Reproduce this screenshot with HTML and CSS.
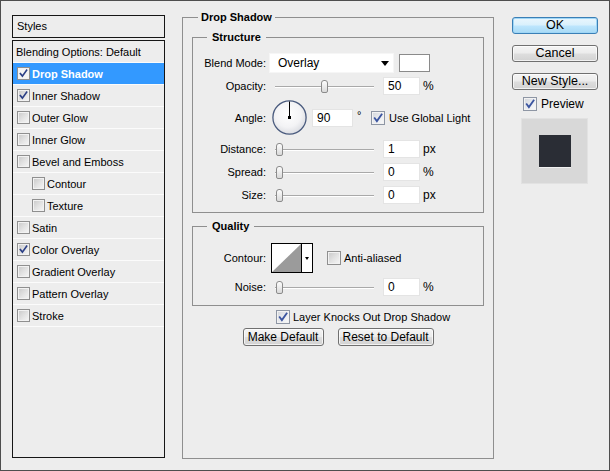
FILE: index.html
```html
<!DOCTYPE html>
<html>
<head>
<meta charset="utf-8">
<link rel="stylesheet" href="styles.css">
</head>
<body>
<div class="window">
  <aside class="styles-panel">
    <div class="styles-head">Styles</div>
    <ul class="styles-list">
      <li class="style-row plain">Blending Options: Default</li>
      <li class="style-row selected"><span class="cb sm on"><svg viewBox="0 0 13 13"><path d="M2.8 6.6 L5.2 9.6 L10.2 2.6" /></svg></span>Drop Shadow</li>
      <li class="style-row"><span class="cb sm on"><svg viewBox="0 0 13 13"><path d="M2.8 6.6 L5.2 9.6 L10.2 2.6" /></svg></span>Inner Shadow</li>
      <li class="style-row"><span class="cb sm"></span>Outer Glow</li>
      <li class="style-row"><span class="cb sm"></span>Inner Glow</li>
      <li class="style-row"><span class="cb sm"></span>Bevel and Emboss</li>
      <li class="style-row sub"><span class="cb sm"></span>Contour</li>
      <li class="style-row sub"><span class="cb sm"></span>Texture</li>
      <li class="style-row"><span class="cb sm"></span>Satin</li>
      <li class="style-row"><span class="cb sm on"><svg viewBox="0 0 13 13"><path d="M2.8 6.6 L5.2 9.6 L10.2 2.6" /></svg></span>Color Overlay</li>
      <li class="style-row"><span class="cb sm"></span>Gradient Overlay</li>
      <li class="style-row"><span class="cb sm"></span>Pattern Overlay</li>
      <li class="style-row"><span class="cb sm"></span>Stroke</li>
    </ul>
  </aside>

  <main class="panel">
    <fieldset class="group outer">
      <legend class="legend-outer">Drop Shadow</legend>

      <fieldset class="group inner structure">
        <legend class="legend-inner">Structure</legend>

        <div class="row row-blend">
          <span class="lbl">Blend Mode:</span>
          <div class="select"><span class="select-text">Overlay</span><span class="select-arrow"></span></div>
          <span class="swatch"></span>
        </div>

        <div class="row row-num gap4">
          <span class="lbl">Opacity:</span>
          <div class="slider"><span class="thumb" style="left:46px"></span></div>
          <span class="num">50</span>
          <span class="unit">%</span>
        </div>

        <div class="row row-angle">
          <span class="lbl">Angle:</span>
          <svg class="dial" viewBox="0 0 35 35" width="35" height="35">
            <defs>
              <radialGradient id="dialFill" cx="45%" cy="40%" r="65%">
                <stop offset="0" stop-color="#ffffff"/>
                <stop offset="0.6" stop-color="#f3f3f5"/>
                <stop offset="1" stop-color="#d6d8de"/>
              </radialGradient>
            </defs>
            <circle cx="17.5" cy="17.5" r="16.6" fill="url(#dialFill)" stroke="#4a5b7e" stroke-width="1.3"/>
            <line x1="17.5" y1="17.5" x2="17.5" y2="1.5" stroke="#000" stroke-width="1"/>
            <rect x="16" y="16" width="3" height="3" fill="#000"/>
          </svg>
          <span class="num num-angle">90</span>
          <span class="deg">°</span>
          <span class="cb md on gl"><svg viewBox="0 0 14 14"><path d="M3.2 7.2 L5.7 10.6 L11.2 2.8" /></svg></span>
          <span class="cb-label">Use Global Light</span>
        </div>

        <div class="row row-num">
          <span class="lbl">Distance:</span>
          <div class="slider"><span class="thumb" style="left:1px"></span></div>
          <span class="num">1</span>
          <span class="unit">px</span>
        </div>

        <div class="row row-num">
          <span class="lbl">Spread:</span>
          <div class="slider"><span class="thumb" style="left:1px"></span></div>
          <span class="num">0</span>
          <span class="unit">%</span>
        </div>

        <div class="row row-num">
          <span class="lbl">Size:</span>
          <div class="slider"><span class="thumb" style="left:1px"></span></div>
          <span class="num">0</span>
          <span class="unit">px</span>
        </div>
      </fieldset>

      <fieldset class="group inner quality">
        <legend class="legend-inner">Quality</legend>

        <div class="row row-contour">
          <span class="lbl">Contour:</span>
          <div class="contour">
            <svg class="contour-curve" viewBox="0 0 30 28" width="30" height="28" preserveAspectRatio="none">
              <polygon points="0,28 30,0 30,28" fill="#9b9b9b"/>
            </svg>
            <span class="contour-btn"><span class="mini-arrow"></span></span>
          </div>
          <span class="cb md aa"></span>
          <span class="cb-label">Anti-aliased</span>
        </div>

        <div class="row row-num">
          <span class="lbl">Noise:</span>
          <div class="slider"><span class="thumb" style="left:1px"></span></div>
          <span class="num">0</span>
          <span class="unit">%</span>
        </div>
      </fieldset>

      <div class="knock">
        <span class="cb md on gl"><svg viewBox="0 0 14 14"><path d="M3.2 7.2 L5.7 10.6 L11.2 2.8" /></svg></span>
        <span class="knock-label">Layer Knocks Out Drop Shadow</span>
      </div>

      <div class="defaults">
        <button class="btn btn-make">Make Default</button>
        <button class="btn btn-reset">Reset to Default</button>
      </div>
    </fieldset>
  </main>

  <div class="actions">
    <button class="btn btn-side btn-ok">OK</button>
    <button class="btn btn-side">Cancel</button>
    <button class="btn btn-side">New Style...</button>
    <div class="preview-row">
      <span class="cb md on gl"><svg viewBox="0 0 14 14"><path d="M3.2 7.2 L5.7 10.6 L11.2 2.8" /></svg></span>
      <span class="preview-label">Preview</span>
    </div>
    <div class="preview-box"><span class="preview-square"></span></div>
  </div>
</div>
</body>
</html>
```

FILE: styles.css
```css
* { box-sizing: border-box; }

body {
  margin: 0;
  background: #ededed;
}

.window {
  width: 610px;
  height: 471px;
  border: 1px solid #4e4e4e;
  background: #ededed;
  display: flex;
  align-items: flex-start;
  padding: 9px 0 0 11px;
  font-family: "Liberation Sans", Arial, sans-serif;
  font-size: 11px;
  color: #000;
}

/* ---------- left styles list ---------- */
.styles-panel {
  width: 153px;
  margin-top: 5px;
  display: flex;
  flex-direction: column;
}

.styles-head {
  height: 23px;
  border: 1px solid #161616;
  padding-left: 4px;
  line-height: 21px;
  margin-bottom: 2px;
}

.styles-list {
  list-style: none;
  margin: 0;
  padding: 0;
  height: 418px;
  border: 1px solid #161616;
}

.style-row {
  height: 22px;
  border-bottom: 1px solid #fbfbfb;
  display: flex;
  align-items: center;
  padding-left: 4px;
  white-space: nowrap;
}

.style-row.plain { padding-left: 3px; }
.style-row.sub { padding-left: 19px; }

.style-row.selected {
  background: #3399ff;
  color: #fff;
  font-weight: bold;
}

/* ---------- checkboxes ---------- */
.cb {
  display: inline-flex;
  flex-shrink: 0;
  border: 1px solid #8f8f8f;
  background: linear-gradient(135deg, #c8c8c8 0%, #e4e4e4 55%, #f7f7f7 100%);
  box-shadow: inset 0 0 0 1px #f2f2f2;
}

.cb svg { width: 100%; height: 100%; display: block; }
.cb path { fill: none; stroke: #2b3f86; stroke-width: 1.9; stroke-linecap: square; }

.cb.sm { width: 13px; height: 13px; margin-right: 2px; }
.cb.md { width: 14px; height: 14px; }

.selected .cb { background: #f4f4f4; }
.cb.gl { background: linear-gradient(135deg, #d3d6dc 0%, #eceef1 60%, #fafafa 100%); border-color: #8e96a4; }
.cb.gl path { stroke: #3b55a0; stroke-width: 2.1; }

.cb-label { margin-left: 4px; white-space: nowrap; }

/* ---------- middle panel ---------- */
.panel {
  margin-left: 17px;
}

.group {
  margin: 0;
  border: 1px solid #8f8f8f;
  min-width: 0;
}

.outer {
  width: 312px;
  height: 449px;
  padding: 6px 9px 0;
}

.legend-outer,
.legend-inner {
  font-weight: bold;
  line-height: 14px;
}

.legend-outer { padding: 0 3px; margin-left: 6px; }
.legend-inner { padding: 0 5px; margin-left: 14px; }

.inner { width: 292px; }
.structure { padding: 9px 0 8px; }
.quality { padding: 10px 0 9px; margin-top: 6px; }

.row {
  display: flex;
  align-items: center;
  white-space: nowrap;
}

.lbl {
  width: 73px;
  flex-shrink: 0;
  text-align: right;
}

.row-blend { height: 20px; }
.row-num { height: 18px; margin-top: 5px; }
.row-num.gap4 { margin-top: 4px; }
.row-angle { height: 35px; margin-top: 5px; }
.row-contour { height: 30px; }
.quality .row-num { margin-top: 5px; }

.select {
  width: 125px;
  height: 20px;
  margin-left: 3px;
  background: #fff;
  border: 1px solid #f6f6f6;
  display: flex;
  align-items: center;
  padding-left: 8px;
  font-size: 12px;
}

.select-arrow {
  margin-left: auto;
  margin-right: 4px;
  width: 0;
  height: 0;
  border-left: 4.5px solid transparent;
  border-right: 4.5px solid transparent;
  border-top: 5px solid #000;
}

.swatch {
  width: 31px;
  height: 18px;
  margin-left: 5px;
  border: 1px solid #8a8a8a;
  background: #fff;
}

.slider {
  position: relative;
  width: 99px;
  height: 13px;
  margin-left: 9px;
  background:
    linear-gradient(#a9a9a9, #a9a9a9) 0 6px / 100% 1px no-repeat,
    linear-gradient(#ffffff, #ffffff) 0 7px / 100% 1px no-repeat;
}

.thumb {
  position: absolute;
  top: 0;
  width: 7px;
  height: 13px;
  border: 1px solid #8b8b8b;
  border-radius: 3px 3px 2px 2px;
  background: linear-gradient(#fdfdfd, #d9d9d9);
}

.num {
  width: 37px;
  height: 18px;
  margin-left: 9px;
  background: #fff;
  border: 1px solid #e4e4e4;
  padding-left: 4px;
  line-height: 16px;
  font-size: 12px;
}

.unit { margin-left: 3px; font-size: 12px; }

.dial { margin-left: 6px; flex-shrink: 0; }

.num-angle { width: 41px; margin-left: 5px; }

.deg { margin-left: 4px; width: 5px; margin-top: -6px; }

.row-angle .cb { margin-left: 9px; }

.contour {
  width: 42px;
  height: 30px;
  margin-left: 5px;
  border: 1px solid #000;
  background: #fff;
  display: flex;
}

.contour-curve {
  width: 30px;
  height: 28px;
  border-right: 1px solid #000;
  display: block;
}

.contour-btn {
  flex: 1;
  display: flex;
  align-items: center;
  justify-content: center;
}

.mini-arrow {
  width: 0;
  height: 0;
  border-left: 2.5px solid transparent;
  border-right: 2.5px solid transparent;
  border-top: 3px solid #000;
}

.cb.aa { margin-left: 14px; }
.row-contour .cb-label { margin-left: 3px; }

.knock {
  display: flex;
  align-items: center;
  height: 14px;
  margin-top: 4px;
  padding-left: 84px;
}

.knock-label { margin-left: 3px; white-space: nowrap; }

.defaults {
  display: flex;
  justify-content: center;
  gap: 14px;
  margin-top: 4px;
}

/* ---------- buttons ---------- */
.btn {
  height: 18px;
  padding: 0;
  border: 1px solid #707070;
  border-radius: 3px;
  background: linear-gradient(#f4f4f4 0%, #ececec 48%, #dedede 52%, #d2d2d2 100%);
  font-family: "Liberation Sans", Arial, sans-serif;
  font-size: 12px;
  color: #000;
  line-height: 15px;
  box-shadow: inset 0 0 0 1px rgba(255, 255, 255, 0.7);
}

.btn-make { width: 81px; }
.btn-reset { width: 96px; }

.actions {
  width: 86px;
  margin-left: 18px;
  margin-top: 7px;
  display: flex;
  flex-direction: column;
}

.btn-side {
  height: 17px;
  margin-bottom: 11px;
  font-size: 12.5px;
}

.btn-ok {
  border-color: #3a7fb6;
  box-shadow: inset 0 0 0 1px #9fd6f6;
  background: linear-gradient(#eaf6fd 0%, #d9f0fc 48%, #bee6fd 52%, #a7d9f5 100%);
}

.preview-row {
  display: flex;
  align-items: center;
  height: 14px;
  margin-top: -4px;
  padding-left: 11px;
}

.preview-label { margin-left: 4px; font-size: 12px; }

.preview-box {
  width: 67px;
  height: 66px;
  margin-left: 9px;
  margin-top: 7px;
  background: #d8d8d8;
  border: 1px solid #e2e2e2;
  display: flex;
  align-items: center;
  justify-content: center;
}

.preview-square {
  width: 32px;
  height: 32px;
  background: #2a2d35;
  box-shadow: 0 1px 0 #f0f0f0;
}
```
